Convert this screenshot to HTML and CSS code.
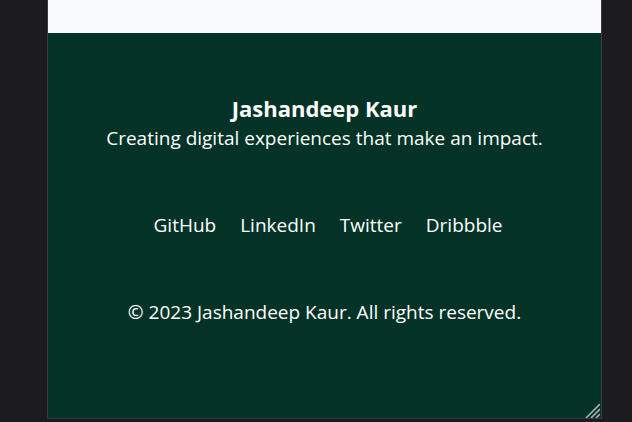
FILE: index.html
```html
<!DOCTYPE html>
<html lang="en">
<head>
<meta charset="utf-8">
<title>Footer</title>
<link rel="stylesheet" href="styles.css">
</head>
<body>
<div class="frame">
  <div class="top-strip"></div>
  <footer class="site-footer">
    <div class="brand">
      <h3 class="brand-name">Jashandeep Kaur</h3>
      <p class="brand-tagline">Creating digital experiences that make an impact.</p>
    </div>
    <nav class="social-links">
      <a href="#">GitHub</a>
      <a href="#">LinkedIn</a>
      <a href="#">Twitter</a>
      <a href="#">Dribbble</a>
    </nav>
    <p class="copyright">© 2023 Jashandeep Kaur. All rights reserved.</p>
  </footer>
  <svg class="grip" width="15" height="15" viewBox="0 0 15 15" aria-hidden="true">
    <path d="M1 15 L15 1 M6 15 L15 6 M11 15 L15 11" stroke="#a9aeb0" stroke-width="1.6" fill="none"/>
  </svg>
</div>
</body>
</html>
```
FILE: styles.css
```css
html, body {
  margin: 0;
  padding: 0;
  background: #1c1c1e;
  height: 422px;
  overflow: hidden;
}
body {
  font-family: "Open Sans", "Noto Sans", sans-serif;
}
.frame {
  position: relative;
  margin-left: 47px;
  width: 553px;
  height: 418px;
  border: 1px solid #3a3a3c;
  border-top: none;
  background: #033326;
  overflow: hidden;
}
.top-strip {
  height: 33px;
  background: #f8f9fb;
}
.site-footer {
  color: #ffffff;
  text-align: center;
  padding-top: 61px;
}
.brand-name {
  margin: 0;
  font-size: 22px;
  font-weight: 700;
  line-height: 28px;
}
.brand-tagline {
  margin: 2px 0 0;
  font-size: 19px;
  line-height: 28px;
}
.social-links {
  display: flex;
  justify-content: center;
  gap: 24px;
  margin-top: 59px;
  padding-left: 7px;
}
.social-links a {
  color: #ffffff;
  text-decoration: none;
  font-size: 19px;
  line-height: 28px;
}
.copyright {
  margin: 59px 0 0;
  font-size: 19px;
  line-height: 28px;
}
.grip {
  position: absolute;
  right: 1px;
  bottom: 0;
}
```
